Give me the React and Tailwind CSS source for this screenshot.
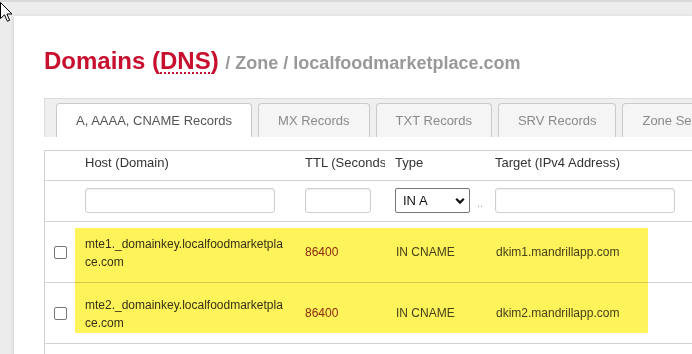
import React from 'react';

const tabs = ['A, AAAA, CNAME Records', 'MX Records', 'TXT Records', 'SRV Records', 'Zone Settings'];

const records = [
  { host: 'mte1._domainkey.localfoodmarketplace.com', ttl: '86400', type: 'IN CNAME', target: 'dkim1.mandrillapp.com' },
  { host: 'mte2._domainkey.localfoodmarketplace.com', ttl: '86400', type: 'IN CNAME', target: 'dkim2.mandrillapp.com' },
];

const cols = 'grid grid-cols-[30px_220px_90px_100px_1fr]';

function TextInput({ w }) {
  return <div className={`h-[25px] ${w} rounded-[3px] border border-[#cfcfcf] bg-white shadow-[inset_0_1px_2px_rgba(0,0,0,0.08)]`} />;
}

function Cursor() {
  return (
    <svg className="absolute left-0 top-0" width="14" height="22" viewBox="0 0 14 22">
      <path d="M0.5 0.5 L0.5 16.5 L4.5 12.8 L7.3 19.2 L9.6 18.2 L6.9 12 L12 12 Z" fill="#fff" stroke="#000" strokeWidth="1" strokeLinejoin="round" />
    </svg>
  );
}

export default function App() {
  return (
    <div className="relative h-[354px] w-[692px] overflow-hidden border-t-2 border-[#dadada] bg-[#ececec] font-['Liberation_Sans',Arial,sans-serif]">
      <div className="ml-[14px] mt-[14px] h-[400px] bg-white pl-[30px] pt-[31px] shadow-[-1px_0_3px_rgba(0,0,0,0.1)]">
        <div className="h-[28px] overflow-visible whitespace-nowrap text-[24px] font-bold leading-[28px] text-[#c8102e]">
          Domains (<span className="underline decoration-dotted decoration-2 underline-offset-[3px]">DNS</span>){' '}
          <span className="text-[18px] leading-[20px] text-[#999]">/ Zone / localfoodmarketplace.com</span>
        </div>

        <div className="mt-[23px] flex gap-[6px] border-l border-t border-[#dcdcdc] bg-[#efefef] pl-[11px] pt-[4px]">
          {tabs.map((t, i) => (
            <div
              key={t}
              className={`flex h-[34px] shrink-0 items-center whitespace-nowrap rounded-t-[4px] border border-b-0 border-[#cacaca] px-[19px] text-[13px] ${
                i === 0 ? 'bg-white text-[#555]' : 'bg-[#f5f5f5] text-[#8a8a8a]'
              }`}
            >
              {t}
            </div>
          ))}
        </div>

        <div className="mt-[13px] min-h-[300px] border-l border-t border-[#d2d2d2]">
          <div className={`${cols} h-[30px] border-b border-[#d2d2d2] pt-[4px] text-[13px] leading-[16px] text-[#333]`}>
            <div />
            <div className="pl-[10px]">Host (Domain)</div>
            <div className="overflow-hidden whitespace-nowrap pl-[10px]">TTL (Seconds)</div>
            <div className="pl-[10px]">Type</div>
            <div className="pl-[10px]">Target (IPv4 Address)</div>
          </div>

          <div className={`${cols} h-[41px] border-b border-[#d2d2d2] pt-[7px]`}>
            <div />
            <div className="pl-[10px]"><TextInput w="w-[190px]" /></div>
            <div className="pl-[10px]"><TextInput w="w-[66px]" /></div>
            <div className="flex items-start pl-[10px]">
              <div className="flex h-[25px] w-[75px] items-center justify-between rounded-[2px] border border-[#767676] bg-white pl-[7px] pr-[4px] text-[13px] text-[#111]">
                IN A
                <svg width="10" height="8" viewBox="0 0 10 8">
                  <path d="M1.2 1.8 L5 5.6 L8.8 1.8" fill="none" stroke="#111" strokeWidth="2.2" />
                </svg>
              </div>
              <span className="ml-[7px] pt-[9px] text-[11px] leading-[12px] text-[#aaa]">..</span>
            </div>
            <div className="pl-[10px]"><TextInput w="w-[180px]" /></div>
          </div>

          <div className="relative">
            {records.map((r) => (
              <div key={r.host} className={`${cols} h-[61px] border-b border-[#d2d2d2] text-[12px] text-[#333]`}>
                <div className="flex items-center pl-[9px]">
                  <div className="h-[13px] w-[13px] rounded-[2px] border border-[#767676] bg-white" />
                </div>
                <div className="break-all pl-[10px] pr-[10px] pt-[13px] leading-[18px]">{r.host}</div>
                <div className="flex items-center pl-[10px] text-[#8e2a1c]">{r.ttl}</div>
                <div className="flex items-center pl-[11px] text-[#444]">{r.type}</div>
                <div className="flex items-center pl-[11px] text-[#444]">{r.target}</div>
              </div>
            ))}
            <div className="pointer-events-none absolute left-[30px] top-[6px] h-[105px] w-[573px] bg-[#fff35a] mix-blend-multiply" />
          </div>
        </div>
      </div>
      <Cursor />
    </div>
  );
}
